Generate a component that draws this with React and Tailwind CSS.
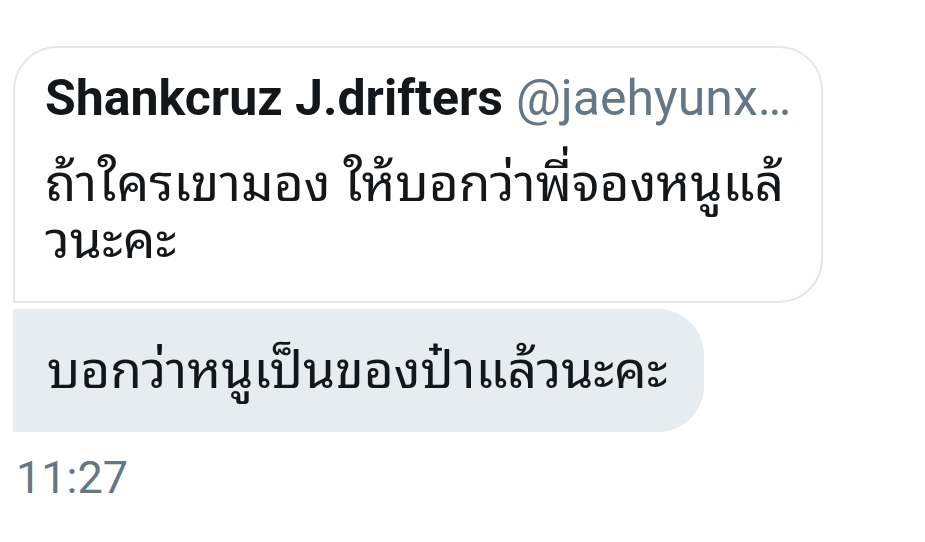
export default function App() {
  const font = { fontFamily: 'Roboto, "Noto Sans Thai Looped", Loma, Waree, Garuda, "Tlwg Typo", Kinnari, Norasi, "Noto Sans Thai", "Noto Sans", "DejaVu Sans", sans-serif' };
  return (
    <div className="w-[925px] h-[542px] bg-white overflow-hidden" style={font}>
      <div className="pt-[46px] pl-[13px]">
        <div className="w-[810px] h-[257px] border-2 border-[#e1e8ed] rounded-tl-[44px] rounded-tr-[44px] rounded-br-[44px] pl-[30px] pr-[30px] pt-[21px]">
          <div className="flex items-baseline whitespace-nowrap text-[50px] leading-[58px]">
            <span className="font-bold text-[#14171a] shrink-0">Shankcruz J.drifters</span>
            <span className="text-[#657786] ml-[13px]">@jaehyunx…</span>
          </div>
          <div className="text-[51.5px] leading-[57px] text-[#14171a] mt-[28px] whitespace-nowrap">
            <div>ถ้าใครเขามอง ให้บอกว่าพี่จองหนูแล้</div>
            <div>วนะคะ</div>
          </div>
        </div>
        <div className="mt-[6px] w-[691px] h-[123px] bg-[#e6ecf0] rounded-tr-[46px] rounded-br-[46px] flex items-center pl-[34px]">
          <span className="text-[51.5px] leading-[58px] text-[#14171a] whitespace-nowrap">บอกว่าหนูเป็นของป๋าแล้วนะคะ</span>
        </div>
        <div className="mt-[20px] pl-[3px] text-[45px] leading-[52px] text-[#657786]">11:27</div>
      </div>
    </div>
  );
}
